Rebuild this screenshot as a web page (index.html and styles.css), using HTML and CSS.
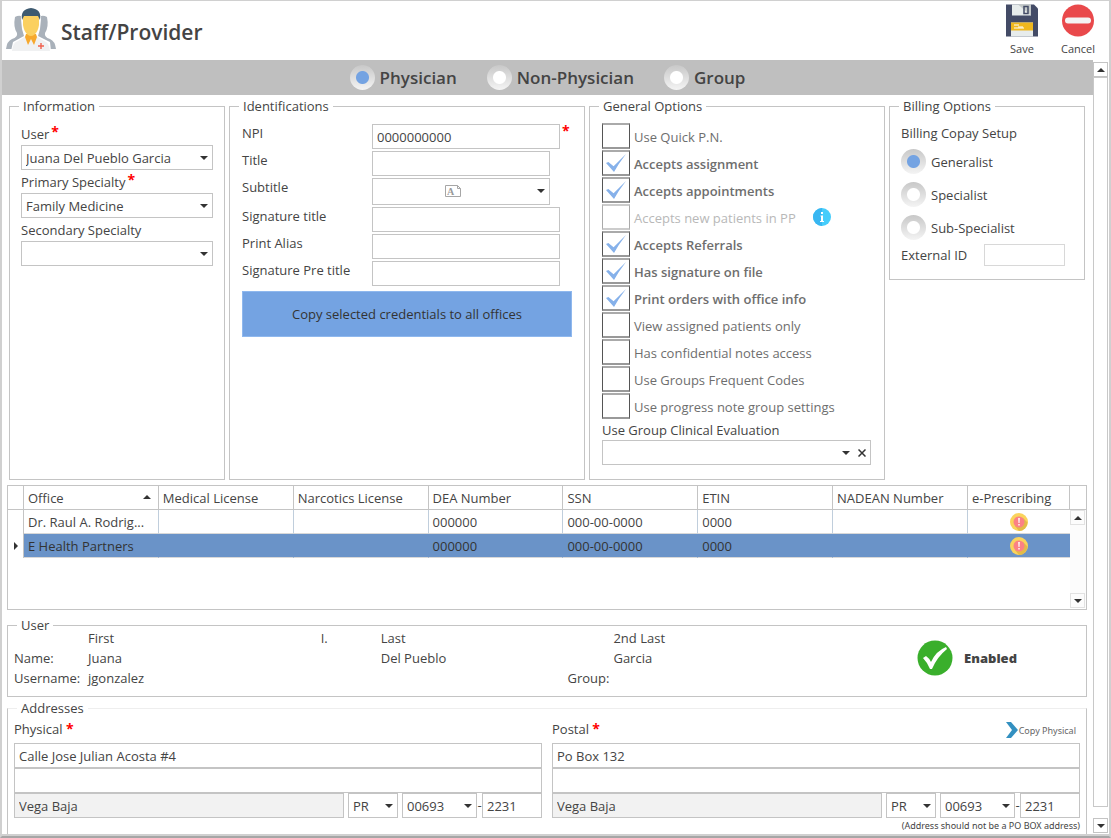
FILE: index.html
```html
<!DOCTYPE html>
<html lang="en">
<head>
<meta charset="utf-8">
<title>Staff/Provider</title>
<link rel="stylesheet" href="styles.css">
</head>
<body>
<div class="window">
  <header class="titlebar">
    <svg class="staff-icon" viewBox="0 0 50 44" aria-hidden="true">
      <path fill="#a9b1ba" d="M9 9Q14 6 19 10L18 24Q20 28 17 31L9 37Q8 40 6 41H0Q1 33 6 31Q12 29 11 25Q7 19 9 9ZM41 9Q36 6 31 10L32 24Q30 28 33 31L41 37Q42 40 44 41H50Q49 33 44 31Q38 29 39 25Q43 19 41 9Z"/>
      <path fill="#fff" d="M15 11Q14 -1 25 -1Q36 -1 35 11L34 21L32 28L44 34L45 43H5L7 34L18 28L16 21Z"/>
      <path fill="#f0f1f2" d="M6 43Q7 34 12 33L20 28H30L38 33Q43 34 44 43Z"/>
      <path fill="#f7a92d" d="M20 26H30L31 29L28 37L25 31L22 37L19 29Z"/>
      <path fill="#fbd060" d="M17 8H33V17Q32 24 28 27Q25 29 22 27Q18 24 17 17Z"/>
      <path fill="#3d5a70" d="M16 12Q14 1 25 0Q36 1 34 12L32 8H18Z"/>
      <path fill="none" stroke="#f0624f" stroke-width="1.4" d="M35 35V41M32 38H38"/>
    </svg>
    <h1 class="title">Staff/Provider</h1>
    <button class="tool" type="button">
      <svg class="tool-icon" viewBox="0 0 32 32" aria-hidden="true">
        <path fill="#434b66" d="M0 0H28L32 4V32H0Z"/>
        <path fill="#e7ecec" d="M6 0H25V11H6Z"/>
        <path fill="#c3c8c8" d="M12 0H25V11Z"/>
        <path fill="none" stroke="#434b66" stroke-width="1.5" d="M18 2H22V9H18Z"/>
        <path fill="#e7ecec" d="M5 18H27V32H5Z"/>
        <path fill="#efb71d" d="M5 18H27V26H5Z"/>
        <path fill="none" stroke="#fff" d="M8 20.500H13M8 23.500H18M12 22.500H17"/>
      </svg>
      <span>Save</span>
    </button>
    <button class="tool" type="button">
      <svg class="tool-icon" viewBox="0 0 32 32" aria-hidden="true">
        <circle cx="16" cy="16" r="16" fill="#e9494b"/>
        <rect x="3" y="13" width="26" height="6" rx="3" fill="#f4f4f4"/>
      </svg>
      <span>Cancel</span>
    </button>
  </header>

  <div class="body">
    <main class="main">
      <div class="kind-band">
        <label class="kind"><input class="radio" type="radio" name="kind" checked>Physician</label>
        <label class="kind"><input class="radio" type="radio" name="kind">Non-Physician</label>
        <label class="kind"><input class="radio" type="radio" name="kind">Group</label>
      </div>

      <div class="panels">
        <fieldset class="panel">
          <legend>Information</legend>
          <div class="info">
            <label class="info-label" for="user">User<b class="req">*</b></label>
            <span class="drop"><select class="field" id="user"><option>Juana Del Pueblo Garcia</option></select></span>
            <label class="info-label" for="primary">Primary Specialty<b class="req">*</b></label>
            <span class="drop"><select class="field" id="primary"><option>Family Medicine</option></select></span>
            <label class="info-label" for="secondary">Secondary Specialty</label>
            <span class="drop"><select class="field" id="secondary"><option></option></select></span>
          </div>
        </fieldset>

        <fieldset class="panel">
          <legend>Identifications</legend>
          <div class="ident">
            <div class="ident-row"><label for="npi">NPI</label><input class="field" id="npi" value="0000000000"><b class="req">*</b></div>
            <div class="ident-row short"><label for="ttl">Title</label><input class="field" id="ttl"></div>
            <div class="ident-row short"><label for="sub">Subtitle</label>
              <span class="drop tall"><select class="field" id="sub"><option></option></select>
                <svg class="card-icon" viewBox="0 0 16 12" aria-hidden="true">
                  <path fill="none" stroke="#a6a6a6" d="M12.500 .5H.5V11.500H15.500V3.500H12.500V.5L15.500 3.500"/>
                  <text class="card-letter" x="2" y="10">A</text>
                </svg>
              </span>
            </div>
            <div class="ident-row"><label for="sig">Signature title</label><input class="field" id="sig"></div>
            <div class="ident-row"><label for="alias">Print Alias</label><input class="field" id="alias"></div>
            <div class="ident-row"><label for="pre">Signature Pre title</label><input class="field" id="pre"></div>
            <button class="copy-all" type="button">Copy selected credentials to all offices</button>
          </div>
        </fieldset>

        <fieldset class="panel">
          <legend>General Options</legend>
          <div class="options">
            <label class="opt"><input class="check" type="checkbox"><span>Use Quick P.N.</span></label>
            <label class="opt"><input class="check" type="checkbox" checked><span>Accepts assignment</span></label>
            <label class="opt"><input class="check" type="checkbox" checked><span>Accepts appointments</span></label>
            <label class="opt"><input class="check" type="checkbox" disabled><span>Accepts new patients in PP</span>
              <svg class="info-icon" viewBox="0 0 18 18" aria-hidden="true">
                <circle cx="9" cy="9" r="9" fill="#46cdfb"/>
                <path fill="#38b6f1" d="M9 0A9 9 0 0 0 9 18Z"/>
                <path fill="#fff" d="M8 4H10V6H8ZM7.500 7.500H10V13H11V14H7V13H8V8.500H7.500Z"/>
              </svg>
            </label>
            <label class="opt"><input class="check" type="checkbox" checked><span>Accepts Referrals</span></label>
            <label class="opt"><input class="check" type="checkbox" checked><span>Has signature on file</span></label>
            <label class="opt"><input class="check" type="checkbox" checked><span>Print orders with office info</span></label>
            <label class="opt"><input class="check" type="checkbox"><span>View assigned patients only</span></label>
            <label class="opt"><input class="check" type="checkbox"><span>Has confidential notes access</span></label>
            <label class="opt"><input class="check" type="checkbox"><span>Use Groups Frequent Codes</span></label>
            <label class="opt"><input class="check" type="checkbox"><span>Use progress note group settings</span></label>
            <label class="eval-label" for="evaluation">Use Group Clinical Evaluation</label>
            <span class="drop clearable"><select class="field" id="evaluation"><option></option></select>
              <button class="clear" type="button" aria-label="Clear"><svg viewBox="0 0 8 8" aria-hidden="true"><path d="M.5 .5L7.500 7.500M7.500 .5L.5 7.500"/></svg></button>
            </span>
          </div>
        </fieldset>

        <fieldset class="panel billing">
          <legend>Billing Options</legend>
          <div class="copay">
            <span class="copay-title">Billing Copay Setup</span>
            <label class="copay-opt"><input class="radio" type="radio" name="copay" checked>Generalist</label>
            <label class="copay-opt"><input class="radio" type="radio" name="copay">Specialist</label>
            <label class="copay-opt"><input class="radio" type="radio" name="copay">Sub-Specialist</label>
            <div class="external"><label for="ext">External ID</label><input class="field" id="ext"></div>
          </div>
        </fieldset>
      </div>

      <div class="grid">
        <table class="offices">
          <colgroup>
            <col class="c-mark"><col><col><col><col><col><col><col><col class="c-rx"><col class="c-bar">
          </colgroup>
          <thead>
            <tr>
              <th></th><th class="sorted">Office<i class="arrow up"></i></th><th>Medical License</th><th>Narcotics License</th><th>DEA Number</th><th>SSN</th><th>ETIN</th><th>NADEAN Number</th><th>e-Prescribing</th><th></th>
            </tr>
          </thead>
          <tbody>
            <tr>
              <td class="mark"></td><td>Dr. Raul A. Rodrig...</td><td></td><td></td><td>000000</td><td>000-00-0000</td><td>0000</td><td></td>
              <td class="rx"><svg class="warn" viewBox="0 0 18 18" aria-hidden="true"><circle cx="9" cy="9" r="9" fill="#fad35c"/><path fill="#e3ba48" d="M13 5L17.500 9.500A9 9 0 0 1 9 18L5 13Z"/><circle cx="9" cy="9" r="5.500" fill="#fb8185"/><path fill="#fff" d="M8.200 5H9.800L9.500 10H8.500ZM8.300 11H9.700V12.500H8.300Z"/></svg></td>
              <td class="bar" rowspan="3"><div class="gridbar"><button class="step" type="button" aria-label="Scroll rows up"><i class="arrow up"></i></button><button class="step" type="button" aria-label="Scroll rows down"><i class="arrow"></i></button></div></td>
            </tr>
            <tr class="selected">
              <td class="mark"><i class="arrow right"></i></td><td>E Health Partners</td><td></td><td></td><td>000000</td><td>000-00-0000</td><td>0000</td><td></td>
              <td class="rx"><svg class="warn" viewBox="0 0 18 18" aria-hidden="true"><circle cx="9" cy="9" r="9" fill="#fad35c"/><path fill="#e3ba48" d="M13 5L17.500 9.500A9 9 0 0 1 9 18L5 13Z"/><circle cx="9" cy="9" r="5.500" fill="#fb8185"/><path fill="#fff" d="M8.200 5H9.800L9.500 10H8.500ZM8.300 11H9.700V12.500H8.300Z"/></svg></td>
            </tr>
            <tr class="filler"><td colspan="9"></td></tr>
          </tbody>
        </table>
      </div>

      <fieldset class="panel account">
        <legend>User</legend>
        <div class="account-body">
          <div class="names">
            <span></span><span>First</span><span>I.</span><span>Last</span><span>2nd Last</span>
            <span>Name:</span><span>Juana</span><span></span><span>Del Pueblo</span><span>Garcia</span>
            <span>Username:</span><span>jgonzalez</span><span></span><span></span><span class="group-label">Group:</span>
          </div>
          <div class="status">
            <svg class="ok" viewBox="0 0 36 36" aria-hidden="true"><circle cx="18" cy="18" r="17.500" fill="#3aaf2c"/><path fill="#fff" d="M6 18L9 16Q12 18 14 22Q19 11 29 7L30 9Q20 17 15 29H13Q10 22 6 18Z"/></svg>
            <b>Enabled</b>
          </div>
        </div>
      </fieldset>

      <fieldset class="panel addresses">
        <legend>Addresses</legend>
        <div class="address-cols">
          <section class="address">
            <div class="address-head"><label for="p1">Physical <b class="req low">*</b></label></div>
            <input class="field" id="p1" value="Calle Jose Julian Acosta #4">
            <input class="field" aria-label="Physical line 2">
            <div class="city-row">
              <input class="field readonly" aria-label="Physical city" value="Vega Baja" readonly>
              <span class="drop state"><select class="field" aria-label="Physical state"><option>PR</option></select></span>
              <span class="drop zip"><select class="field" aria-label="Physical zip"><option>00693</option></select></span>
              <span class="dash">-</span>
              <input class="field plus4" aria-label="Physical zip extension" value="2231">
            </div>
          </section>
          <section class="address">
            <div class="address-head"><label for="m1">Postal <b class="req low">*</b></label>
              <button class="copy-physical" type="button"><svg viewBox="0 0 12 16" aria-hidden="true"><path fill="#3390c0" d="M0 0H5L12 8L5 16H0L6 8Z"/></svg>Copy Physical</button>
            </div>
            <input class="field" id="m1" value="Po Box 132">
            <input class="field" aria-label="Postal line 2">
            <div class="city-row">
              <input class="field readonly" aria-label="Postal city" value="Vega Baja" readonly>
              <span class="drop state"><select class="field" aria-label="Postal state"><option>PR</option></select></span>
              <span class="drop zip"><select class="field" aria-label="Postal zip"><option>00693</option></select></span>
              <span class="dash">-</span>
              <input class="field plus4" aria-label="Postal zip extension" value="2231">
            </div>
            <small class="note">(Address should not be a PO BOX address)</small>
          </section>
        </div>
      </fieldset>
    </main>

    <div class="scrollbar">
      <button class="step" type="button" aria-label="Scroll up"><i class="arrow up"></i></button>
      <div class="thumb"></div>
      <button class="step" type="button" aria-label="Scroll down"><i class="arrow"></i></button>
    </div>
  </div>
</div>
</body>
</html>
```
FILE: styles.css
```css
* { box-sizing: border-box; }

body {
  margin: 0;
  background: #fff;
  color: #444;
  font: 13px/18px "Open Sans", "Noto Sans", sans-serif;
}

input, select, button { font: inherit; color: inherit; margin: 0; }
button { padding: 0; background: none; border: 0; }

.window {
  min-height: 100vh;
  display: flex;
  flex-direction: column;
  border: 2px solid #d0d0d0;
  border-top-width: 1px;
  border-bottom: 2px solid #a6a6a6;
  box-shadow: inset 0 -2px #d0d0d0;
  padding-bottom: 2px;
}

/* Title bar */
.titlebar {
  display: flex;
  align-items: flex-start;
  gap: 4px;
  height: 59px;
  padding: 3px 11px 0 4px;
}
.staff-icon { width: 50px; height: 44px; margin-top: 4px; }
.title {
  flex: 1;
  margin: 0 0 0 1px;
  font-size: 21px;
  line-height: 56px;
  font-weight: 600;
}
.tool {
  width: 40px;
  margin-left: 12px;
  display: flex;
  flex-direction: column;
  align-items: center;
  gap: 3px;
  font-size: 11px;
}
.tool-icon { width: 32px; height: 33px; }

.body { flex: 1; display: flex; }
.main { flex: 1; min-width: 0; display: flex; flex-direction: column; }

/* Provider kind */
.kind-band {
  display: flex;
  justify-content: center;
  gap: 30px;
  height: 35px;
  background: #bfbfbf;
}
.kind {
  display: flex;
  align-items: center;
  gap: 5px;
  font-size: 17px;
  font-weight: 600;
}
.radio {
  appearance: none;
  width: 25px;
  height: 25px;
  border-radius: 50%;
  background: radial-gradient(circle, #fff 6px, transparent 7px), linear-gradient(#c8c8c8, #f4f4f4);
}
.radio:checked {
  background: radial-gradient(circle, #74a3e2 6px, transparent 7px), linear-gradient(#c8c8c8, #f4f4f4);
}

/* Group boxes */
.panels {
  display: grid;
  grid-template-columns: 216fr 356fr 296fr 196fr;
  gap: 4px;
  padding: 2px 8px 0 7px;
}
.panel {
  min-width: 0;
  margin: 0;
  padding: 0;
  border: 1px solid #c4c4c4;
}
.panel > legend { margin-left: 9px; padding: 0 4px; }

.field {
  display: block;
  width: 100%;
  height: 25px;
  padding: 0 4px;
  border: 1px solid #c4c4c4;
  border-radius: 0;
  background: #fff;
  outline: 0;
}
.drop { position: relative; display: block; }
.drop .field { appearance: none; }
.drop::after {
  content: "";
  position: absolute;
  right: 5px;
  top: 11px;
  border: 4px solid transparent;
  border-top-color: #333;
  border-bottom: 0;
  pointer-events: none;
}
.drop.clearable::after { right: 21px; }
.drop.tall .field { height: 27px; }
.req { color: #f00; font-size: 14px; margin-left: 2px; vertical-align: 2px; line-height: 1; }
.req.low { margin-left: 0; vertical-align: 0; }

.info { padding: 7px 11px; }
.info-label { display: block; height: 23px; line-height: 25px; }
.info-label .req { line-height: 1; }

.ident { display: flex; flex-direction: column; gap: 2px; padding: 9px 12px 0; }
.ident-row { display: grid; grid-template-columns: 130px 188px 1fr; }
.ident-row.short { grid-template-columns: 130px 178px 1fr; }
.card-icon { position: absolute; left: 73px; top: 7px; width: 16px; height: 12px; }
.card-letter { font: bold 10px "Liberation Serif", serif; fill: #999; }
.copy-all {
  height: 46px;
  margin-top: 3px;
  background: #74a3e2;
  border: 1px solid #8fb8ee;
  color: #333;
}

.options { padding: 8px 13px 14px 12px; }
.opt { display: flex; gap: 4px; height: 27px; line-height: 28px; color: #6e6e6e; }
.check {
  appearance: none;
  width: 28px;
  height: 26px;
  border: 1px solid #555;
  border-top: 2px solid #aaa;
  border-bottom: 2px solid #999;
  background: #fff;
}
.check:checked::after {
  content: "";
  display: block;
  width: 20px;
  height: 18px;
  margin: 2px 3px;
  background: #86b1ea;
  clip-path: polygon(0 50%, 12% 44%, 38% 68%, 100% 0, 64% 55%, 40% 100%);
}
.check:checked + span { font-weight: 600; }
.check:disabled { border-color: #ccc #aaa; }
.check:disabled + span { color: #b8b8b8; }
.info-icon { width: 18px; height: 18px; margin: 4px 0 0 13px; }
.eval-label { display: block; line-height: 20px; }
.clear { position: absolute; right: 5px; top: 9px; width: 8px; height: 8px; display: flex; }
.clear svg { width: 8px; height: 8px; stroke: #333; stroke-width: 1.5; }

.billing { align-self: start; }
.copay { padding: 9px 19px 13px 11px; }
.copay-title { display: block; margin-bottom: 3px; }
.copay-opt { display: flex; align-items: center; gap: 5px; height: 33px; }
.external { display: flex; justify-content: space-between; align-items: center; }
.external .field { width: 81px; height: 22px; border-color: #d8d8d8; }

/* Offices grid */
.grid { margin: 5px 6px 0 5px; border: 1px solid #c4c4c4; }
.offices { width: 100%; table-layout: fixed; border-collapse: separate; border-spacing: 0; }
.c-mark { width: 16px; }
.c-rx { width: 102px; }
.c-bar { width: 16px; }
.offices th {
  height: 24px;
  padding: 0 4px;
  font-weight: 400;
  text-align: left;
  white-space: nowrap;
  border-right: 1px solid #c4c4c4;
  border-bottom: 1px solid #c4c4c4;
}
.offices th:last-child { border-right: 0; }
.sorted .arrow { float: right; margin: 6px 3px 0 0; }
.offices td {
  height: 24px;
  padding: 0 4px;
  white-space: nowrap;
  border-right: 1px solid #c0cedc;
  border-bottom: 1px solid #d8d8d8;
}
.offices .mark { padding: 0; border-bottom: 0; border-right-color: #c4c4c4; }
.mark .arrow { margin: 0 auto; }
.selected td:not(.mark) { background: #6a93c8; border-right-color: #6a93c8; color: #333; }
.offices .rx { border-right: 0; text-align: center; }
.warn { display: block; width: 18px; height: 18px; margin: 0 auto; }
.offices .filler td { height: 51px; border: 0; }
.offices .bar { padding: 0; border: 0; vertical-align: top; }
.gridbar { display: flex; flex-direction: column; justify-content: space-between; height: 98px; background: #fcfcfc; }
.gridbar .step { border-color: #e2e2e2; }

.arrow {
  display: block;
  width: 0;
  height: 0;
  border: 4px solid transparent;
  border-top-color: #333;
  border-bottom: 0;
}
.arrow.up { border-top: 0; border-bottom: 4px solid #333; }
.arrow.right { border: 4px solid transparent; border-left-color: #333; border-right: 0; }

/* Account */
.account { margin: 6px 6px 0 5px; }
.account-body { display: flex; align-items: center; margin-top: -6px; padding: 0 69px 8px 6px; }
.names { flex: 1; display: grid; grid-template-columns: 74px 233fr 60px 233fr 304fr; line-height: 20px; }
.group-label { margin-left: -46px; }
.status { display: flex; align-items: center; gap: 11px; font-weight: 700; }
.ok { width: 36px; height: 36px; }

/* Addresses */
.addresses { flex: 1; margin: 2px 6px 0 5px; border-top-color: #eee; border-bottom: 0; }
.address-cols { display: grid; grid-template-columns: 1fr 1fr; gap: 10px; padding: 0 6px; }
.address-head { display: flex; justify-content: space-between; height: 26px; line-height: 25px; }
.copy-physical { display: flex; align-items: center; gap: 1px; margin-right: 4px; font-family: "Noto Sans", sans-serif; font-size: 9px; color: #666; }
.copy-physical svg { width: 12px; height: 16px; }
.city-row { display: flex; }
.readonly { flex: 1; min-width: 0; background: #f2f2f2; }
.state { width: 50px; margin-left: 4px; }
.zip { width: 75px; margin-left: 4px; }
.dash { width: 5px; line-height: 25px; text-align: center; }
.city-row .plus4 { width: 60px; }
.note { display: block; text-align: right; font-family: "Noto Sans", sans-serif; font-size: 9px; line-height: 16px; }

/* Window scroll bar */
.scrollbar { width: 16px; padding: 2px 0 1px; display: flex; flex-direction: column; }
.step {
  height: 15px;
  width: 15px;
  flex: none;
  display: flex;
  align-items: center;
  justify-content: center;
  border: 1px solid #c4c4c4;
}
.thumb { flex: 1; width: 15px; margin-bottom: 11px; border: 1px solid #c8c8c8; }
```
